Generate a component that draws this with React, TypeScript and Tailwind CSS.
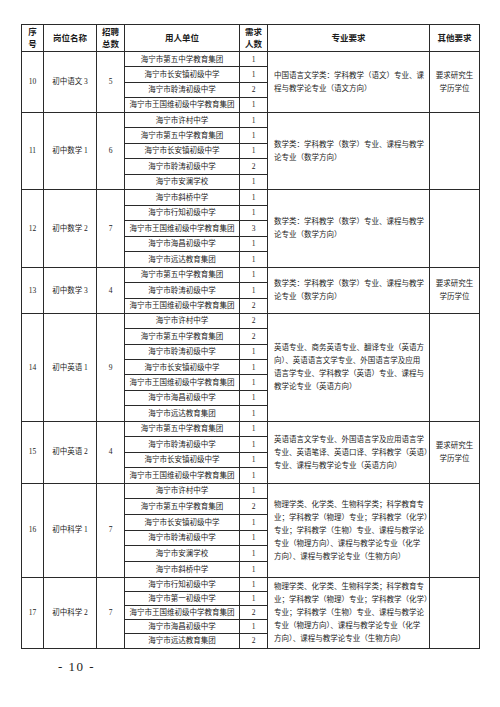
import React from "react";

// ─── Data ─────────────────────────────────────────────────────────────────────
type Unit = { name: string; n: number };

type Group = {
  no: number;
  post: string;
  total: number;
  rowH: string;
  units: Unit[];
  major: string[];
  other?: string[];
};

const groups: Group[] = [
  {
    no: 10,
    post: "初中语文 3",
    total: 5,
    rowH: "h-[15.25px]",
    units: [
      { name: "海宁市第五中学教育集团", n: 1 },
      { name: "海宁市长安镇初级中学", n: 1 },
      { name: "海宁市聆涛初级中学", n: 2 },
      { name: "海宁市王国维初级中学教育集团", n: 1 },
    ],
    major: ["中国语言文学类：学科教学（语文）专业、课", "程与教学论专业（语文方向）"],
    other: ["要求研究生", "学历学位"],
  },
  {
    no: 11,
    post: "初中数学 1",
    total: 6,
    rowH: "h-[15.4px]",
    units: [
      { name: "海宁市许村中学", n: 1 },
      { name: "海宁市第五中学教育集团", n: 1 },
      { name: "海宁市长安镇初级中学", n: 1 },
      { name: "海宁市聆涛初级中学", n: 2 },
      { name: "海宁市安澜学校", n: 1 },
    ],
    major: ["数学类：学科教学（数学）专业、课程与教学", "论专业（数学方向）"],
  },
  {
    no: 12,
    post: "初中数学 2",
    total: 7,
    rowH: "h-[15.6px]",
    units: [
      { name: "海宁市斜桥中学", n: 1 },
      { name: "海宁市行知初级中学", n: 1 },
      { name: "海宁市王国维初级中学教育集团", n: 3 },
      { name: "海宁市海昌初级中学", n: 1 },
      { name: "海宁市远达教育集团", n: 1 },
    ],
    major: ["数学类：学科教学（数学）专业、课程与教学", "论专业（数学方向）"],
  },
  {
    no: 13,
    post: "初中数学 3",
    total: 4,
    rowH: "h-[15.3px]",
    units: [
      { name: "海宁市第五中学教育集团", n: 1 },
      { name: "海宁市聆涛初级中学", n: 1 },
      { name: "海宁市王国维初级中学教育集团", n: 2 },
    ],
    major: ["数学类：学科教学（数学）专业、课程与教学", "论专业（数学方向）"],
    other: ["要求研究生", "学历学位"],
  },
  {
    no: 14,
    post: "初中英语 1",
    total: 9,
    rowH: "h-[15.4px]",
    units: [
      { name: "海宁市许村中学", n: 2 },
      { name: "海宁市第五中学教育集团", n: 2 },
      { name: "海宁市聆涛初级中学", n: 1 },
      { name: "海宁市长安镇初级中学", n: 1 },
      { name: "海宁市王国维初级中学教育集团", n: 1 },
      { name: "海宁市海昌初级中学", n: 1 },
      { name: "海宁市远达教育集团", n: 1 },
    ],
    major: [
      "英语专业、商务英语专业、翻译专业（英语方",
      "向）、英语语言文学专业、外国语言学及应用",
      "语言学专业、学科教学（英语）专业、课程与",
      "教学论专业（英语方向）",
    ],
  },
  {
    no: 15,
    post: "初中英语 2",
    total: 4,
    rowH: "h-[15.5px]",
    units: [
      { name: "海宁市第五中学教育集团", n: 1 },
      { name: "海宁市聆涛初级中学", n: 1 },
      { name: "海宁市长安镇初级中学", n: 1 },
      { name: "海宁市王国维初级中学教育集团", n: 1 },
    ],
    major: [
      "英语语言文学专业、外国语言学及应用语言学",
      "专业、英语笔译、英语口译、学科教学（英语）",
      "专业、课程与教学论专业（英语方向）",
    ],
    other: ["要求研究生", "学历学位"],
  },
  {
    no: 16,
    post: "初中科学 1",
    total: 7,
    rowH: "h-[15.7px]",
    units: [
      { name: "海宁市许村中学", n: 1 },
      { name: "海宁市第五中学教育集团", n: 2 },
      { name: "海宁市长安镇初级中学", n: 1 },
      { name: "海宁市聆涛初级中学", n: 1 },
      { name: "海宁市安澜学校", n: 1 },
      { name: "海宁市斜桥中学", n: 1 },
    ],
    major: [
      "物理学类、化学类、生物科学类；科学教育专",
      "业；学科教学（物理）专业；学科教学（化学）",
      "专业；学科教学（生物）专业、课程与教学论",
      "专业（物理方向）、课程与教学论专业（化学",
      "方向）、课程与教学论专业（生物方向）",
    ],
  },
  {
    no: 17,
    post: "初中科学 2",
    total: 7,
    rowH: "h-[14.2px]",
    units: [
      { name: "海宁市行知初级中学", n: 1 },
      { name: "海宁市第一初级中学", n: 1 },
      { name: "海宁市王国维初级中学教育集团", n: 2 },
      { name: "海宁市海昌初级中学", n: 1 },
      { name: "海宁市远达教育集团", n: 2 },
    ],
    major: [
      "物理学类、化学类、生物科学类；科学教育专",
      "业；学科教学（物理）专业；学科教学（化学）",
      "专业；学科教学（生物）专业、课程与教学论",
      "专业（物理方向）、课程与教学论专业（化学",
      "方向）、课程与教学论专业（生物方向）",
    ],
  },
];

const cell = "border border-[#2a2a2a] p-0 align-middle text-center";

// ─── Group rows ───────────────────────────────────────────────────────────────
function GroupRows({ g }: { g: Group }) {
  const span = g.units.length;
  return (
    <>
      {g.units.map((u, i) => (
        <tr key={u.name + i} className={g.rowH}>
          {i === 0 && (
            <>
              <td rowSpan={span} className={cell}>
                {g.no}
              </td>
              <td rowSpan={span} className={cell}>
                {g.post}
              </td>
              <td rowSpan={span} className={cell}>
                {g.total}
              </td>
            </>
          )}
          <td className={`${cell} whitespace-nowrap`}>{u.name}</td>
          <td className={cell}>{u.n}</td>
          {i === 0 && (
            <>
              <td rowSpan={span} className={`${cell} text-left pl-[6px]`}>
                <div className="leading-[13px] whitespace-nowrap">
                  {g.major.map((l) => (
                    <div key={l}>{l}</div>
                  ))}
                </div>
              </td>
              <td rowSpan={span} className={`${cell} leading-[13px]`}>
                {g.other?.map((l) => (
                  <div key={l}>{l}</div>
                ))}
              </td>
            </>
          )}
        </tr>
      ))}
    </>
  );
}

// ─── Page ─────────────────────────────────────────────────────────────────────
export default function App() {
  return (
    <div
      className="w-[500px] h-[707px] bg-white text-[#1c1c1c] overflow-hidden"
      style={{ fontFamily: '"Liberation Serif", "Noto Sans CJK SC", serif' }}
    >
      <div className="pt-[24px] pl-[21px]">
        <table className="w-[458px] table-fixed border-collapse border-[1.5px] border-[#222] text-[7.5px]">
          <colgroup>
            <col className="w-[22px]" />
            <col className="w-[53px]" />
            <col className="w-[28px]" />
            <col className="w-[115px]" />
            <col className="w-[28px]" />
            <col className="w-[162px]" />
            <col className="w-[50px]" />
          </colgroup>
          <thead>
            <tr className="h-[27px] text-[8.5px] font-bold leading-[12px]">
              <th className={cell}>
                序<br />号
              </th>
              <th className={cell}>岗位名称</th>
              <th className={cell}>
                招聘<br />总数
              </th>
              <th className={cell}>用人单位</th>
              <th className={cell}>
                需求<br />人数
              </th>
              <th className={cell}>专业要求</th>
              <th className={cell}>其他要求</th>
            </tr>
          </thead>
          <tbody>
            {groups.map((g) => (
              <GroupRows key={g.no} g={g} />
            ))}
          </tbody>
        </table>
        <div className="mt-[8px] ml-[37px] text-[13px] tracking-[1.5px]">- 10 -</div>
      </div>
    </div>
  );
}
